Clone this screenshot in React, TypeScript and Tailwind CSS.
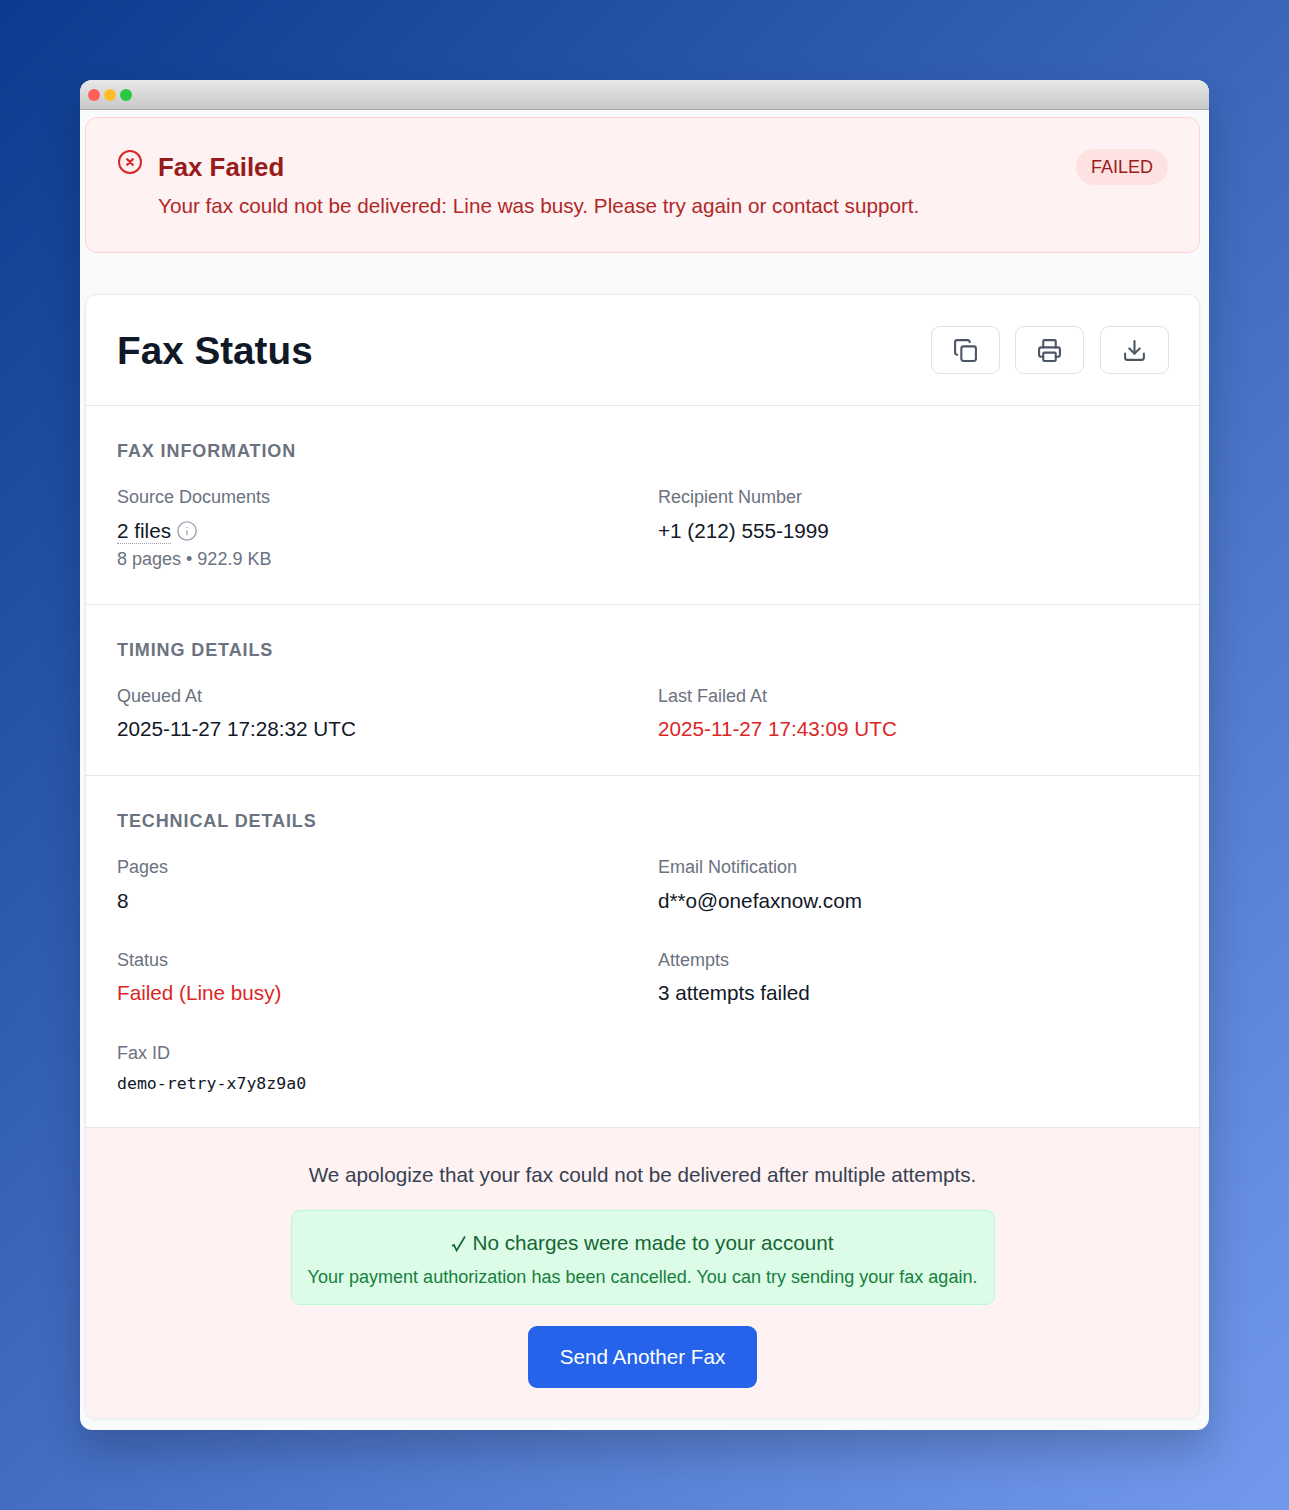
import { Copy, Printer, Download, Info } from "lucide-react";
import type { ReactNode } from "react";

function Field({ label, children }: { label: string; children: ReactNode }) {
  return (
    <div>
      <div className="text-[18px] leading-[24px] text-[#6b7280]">{label}</div>
      <div className="mt-[9.5px] text-[20.7px] leading-[24px] text-[#111827]">{children}</div>
    </div>
  );
}

function SectionTitle({ children }: { children: ReactNode }) {
  return <h3 className="text-[18px] leading-[24px] font-bold tracking-[0.9px] text-[#6b7280]">{children}</h3>;
}

function IconButton({ children }: { children: ReactNode }) {
  return (
    <button className="flex h-[48px] w-[69px] items-center justify-center rounded-[9px] border border-[#dfe1e7] bg-white text-[#4b5563]">
      {children}
    </button>
  );
}

export default function App() {
  return (
    <div className="min-h-[1510px] bg-[linear-gradient(135deg,#0b3a8e_0%,#7299ec_100%)] p-20 font-['Liberation_Sans',Arial,sans-serif]">
      <div className="h-[1350px] overflow-hidden rounded-[12px] bg-[#f9fafb] shadow-[0_20px_40px_rgba(0,0,0,0.2)]">
        {/* Title bar */}
        <div className="flex h-[30px] items-center gap-[4px] border-b border-[#a8a8a8] bg-[linear-gradient(180deg,#e8e8e8,#c8c8c8)] pl-[8px]">
          <span className="h-3 w-3 rounded-full bg-[#ff5f57]" />
          <span className="h-3 w-3 rounded-full bg-[#ffbd2e]" />
          <span className="h-3 w-3 rounded-full bg-[#28c840]" />
        </div>

        <div className="pr-[9px] pl-[5px]">
          {/* Alert */}
          <div className="mt-[7px] flex h-[136px] items-start justify-between rounded-[12px] border border-[#fed2d2] bg-[#fef2f2] pt-[31px] pr-[31px] pl-[32px]">
            <div className="flex gap-[16px]">
              <svg width="24" height="24" viewBox="0 0 24 24" fill="none" stroke="#dc2626" strokeWidth="2" strokeLinecap="round" className="mt-px">
                <circle cx="12" cy="12" r="11" />
                <path d="M9.25 9.25l5.5 5.5M14.75 9.25l-5.5 5.5" strokeWidth="2.4" />
              </svg>
              <div>
                <h2 className="mt-[2px] text-[25.8px] leading-[32px] font-bold text-[#991b1b]">Fax Failed</h2>
                <p className="mt-[7px] text-[20.7px] leading-[32px] text-[#b02828]">
                  Your fax could not be delivered: Line was busy. Please try again or contact support.
                </p>
              </div>
            </div>
            <span className="flex h-[36px] items-center rounded-full bg-[#fee2e2] px-[15px] text-[18px] text-[#991b1b]">FAILED</span>
          </div>

          {/* Card */}
          <div className="mt-[41px] h-[1125px] overflow-hidden rounded-[12px] border border-[#e9ebef] bg-white shadow-[0_1px_3px_rgba(0,0,0,0.06)]">
            <div className="flex h-[111px] items-center justify-between border-b border-[#e5e7eb] pr-[30px] pl-[31px]">
              <h1 className="mt-[2px] text-[38.7px] leading-[48px] font-bold text-[#111827]">Fax Status</h1>
              <div className="flex gap-[15.6px]">
                <IconButton><Copy size={25} strokeWidth={2} /></IconButton>
                <IconButton><Printer size={25} strokeWidth={2} /></IconButton>
                <IconButton><Download size={25} strokeWidth={2} /></IconButton>
              </div>
            </div>

            <section className="h-[199px] border-b border-[#e5e7eb] px-[31px] pt-[33px]">
              <SectionTitle>FAX INFORMATION</SectionTitle>
              <div className="mt-[22px] grid grid-cols-2 gap-x-[31px]">
                <div>
                  <div className="text-[18px] leading-[24px] text-[#6b7280]">Source Documents</div>
                  <div className="mt-[9.5px] flex items-center gap-[5px] text-[20.7px] leading-[24px] text-[#111827]">
                    <span className="border-b border-dotted border-[#9ca3af]">2 files</span>
                    <Info size={22} strokeWidth={1.5} className="text-[#9ca3af]" />
                  </div>
                  <div className="mt-[3.5px] text-[18px] leading-[24px] text-[#6b7280]">8 pages • 922.9 KB</div>
                </div>
                <Field label="Recipient Number">+1 (212) 555-1999</Field>
              </div>
            </section>

            <section className="h-[171px] border-b border-[#e5e7eb] px-[31px] pt-[33px]">
              <SectionTitle>TIMING DETAILS</SectionTitle>
              <div className="mt-[21.7px] grid grid-cols-2 gap-x-[31px]">
                <Field label="Queued At">2025-11-27 17:28:32 UTC</Field>
                <Field label="Last Failed At"><span className="text-[#dc2626]">2025-11-27 17:43:09 UTC</span></Field>
              </div>
            </section>

            <section className="h-[352px] border-b border-[#e5e7eb] px-[31px] pt-[33px]">
              <SectionTitle>TECHNICAL DETAILS</SectionTitle>
              <div className="mt-[22px] grid grid-cols-2 gap-x-[31px] gap-y-[35.2px]">
                <Field label="Pages">8</Field>
                <Field label="Email Notification">d**o@onefaxnow.com</Field>
                <Field label="Status"><span className="text-[#dc2626]">Failed (Line busy)</span></Field>
                <Field label="Attempts">3 attempts failed</Field>
                <div className="pt-[0.6px]">
                  <div className="text-[18px] leading-[24px] text-[#6b7280]">Fax ID</div>
                  <div className="mt-[7px] font-['DejaVu_Sans_Mono',monospace] text-[16.55px] leading-[24px] text-[#111827]">demo-retry-x7y8z9a0</div>
                </div>
              </div>
            </section>

            {/* Footer */}
            <div className="flex h-[291px] flex-col items-center bg-[#fef2f2] pt-[31px]">
              <p className="text-[20.7px] leading-[32px] text-[#374151]">We apologize that your fax could not be delivered after multiple attempts.</p>
              <div className="mt-[19px] flex h-[95px] w-[704px] flex-col items-center rounded-[9px] border border-[#bbf7d0] bg-[#dcfce7] pt-[16px]">
                <div className="flex items-center gap-[6px] text-[20.7px] leading-[32px] text-[#166534]">
                  <svg width="15" height="19" viewBox="0 0 15 19" fill="none" stroke="#166534" className="mt-[2px]">
                    <path d="M1 11l2 -1 2.6 5.5L14 1.5" strokeWidth="1.7" />
                  </svg>
                  <span>No charges were made to your account</span>
                </div>
                <div className="mt-[4px] text-[18.05px] leading-[28px] text-[#15803d]">Your payment authorization has been cancelled. You can try sending your fax again.</div>
              </div>
              <button className="mt-[21px] h-[62px] w-[229px] rounded-[9px] bg-[#2563eb] text-[20.7px] text-white">Send Another Fax</button>
            </div>
          </div>
        </div>
      </div>
    </div>
  );
}
